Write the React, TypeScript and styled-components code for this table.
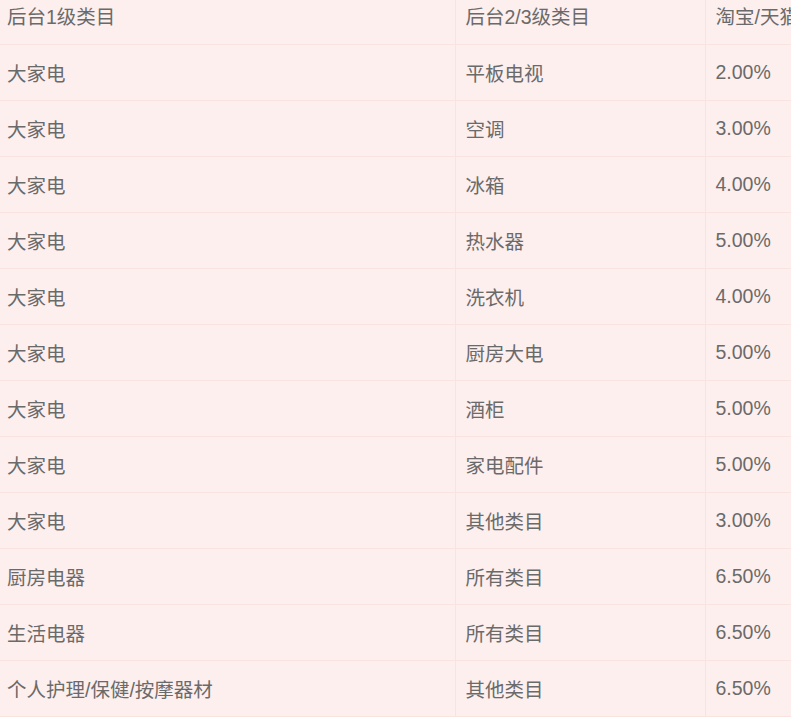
import React from "react";
import styled, { createGlobalStyle } from "styled-components";

const GlobalStyle = createGlobalStyle`
  html, body {
    margin: 0;
    padding: 0;
    background: #fdefee;
    overflow: hidden;
  }
`;

const Page = styled.div`
  width: 791px;
  height: 717px;
  overflow: hidden;
  background: #fdefee;
`;

const Table = styled.table`
  margin: -12px 0 0 -3px;
  border-collapse: collapse;
  table-layout: fixed;
  width: 920px;
  font-family: "Liberation Sans", Arial, "Noto Sans CJK SC", sans-serif;
  font-size: 19.5px;
  color: #6a6a6a;
`;

const Row = styled.tr`
  height: 56px;
  border-bottom: 1px solid #f9e3e1;
`;

const Cell = styled.td<{ $first?: boolean }>`
  padding: 0 10px;
  vertical-align: middle;
  white-space: nowrap;
  overflow: hidden;
  border-left: ${(p) => (p.$first ? "none" : "1px solid #f9e3e1")};
`;

const HeadCell = styled(Cell).attrs({ as: "th" })`
  font-weight: normal;
  text-align: left;
`;

const rows: [string, string, string][] = [
  ["大家电", "平板电视", "2.00%"],
  ["大家电", "空调", "3.00%"],
  ["大家电", "冰箱", "4.00%"],
  ["大家电", "热水器", "5.00%"],
  ["大家电", "洗衣机", "4.00%"],
  ["大家电", "厨房大电", "5.00%"],
  ["大家电", "酒柜", "5.00%"],
  ["大家电", "家电配件", "5.00%"],
  ["大家电", "其他类目", "3.00%"],
  ["厨房电器", "所有类目", "6.50%"],
  ["生活电器", "所有类目", "6.50%"],
  ["个人护理/保健/按摩器材", "其他类目", "6.50%"],
];

export default function App() {
  return (
    <Page>
      <GlobalStyle />
      <Table>
        <colgroup>
          <col style={{ width: 458 }} />
          <col style={{ width: 250 }} />
          <col style={{ width: 212 }} />
        </colgroup>
        <thead>
          <Row>
            <HeadCell $first>后台1级类目</HeadCell>
            <HeadCell>后台2/3级类目</HeadCell>
            <HeadCell>淘宝/天猫佣金比例</HeadCell>
          </Row>
        </thead>
        <tbody>
          {rows.map(([a, b, c], i) => (
            <Row key={i}>
              <Cell $first>{a}</Cell>
              <Cell>{b}</Cell>
              <Cell>{c}</Cell>
            </Row>
          ))}
        </tbody>
      </Table>
    </Page>
  );
}
